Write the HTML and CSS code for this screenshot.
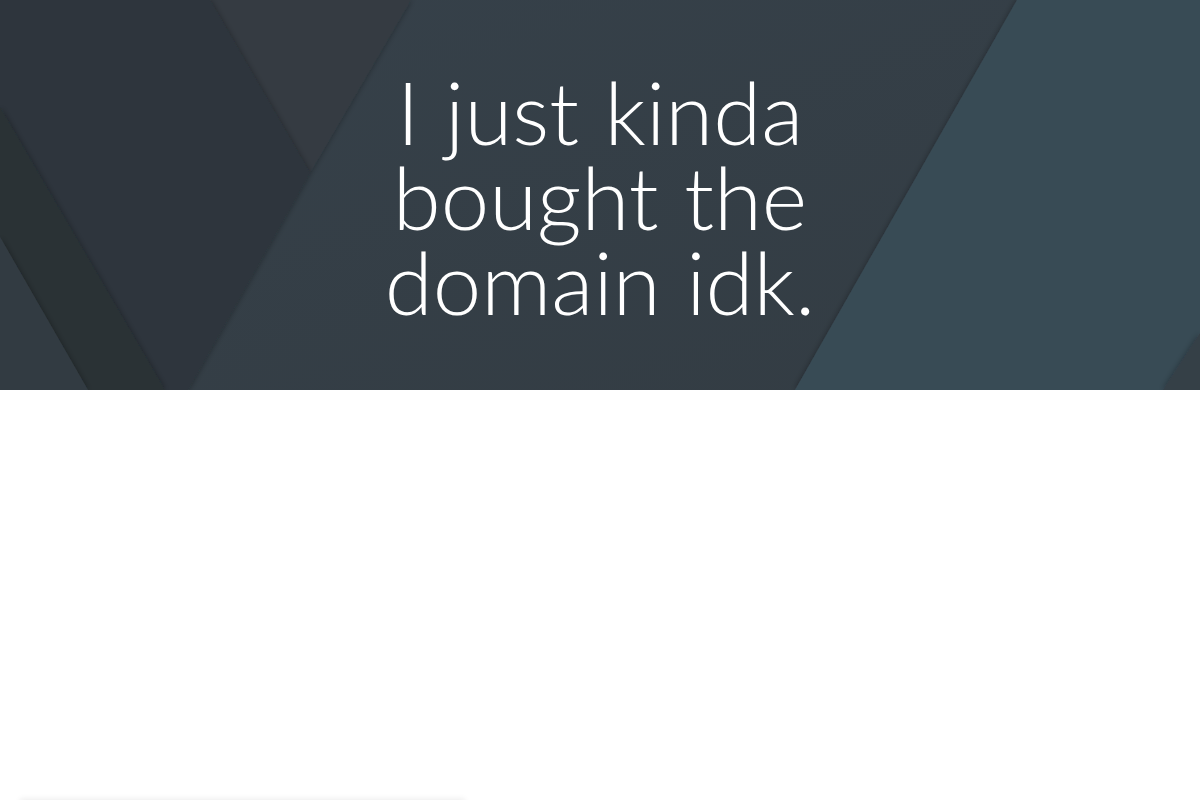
FILE: index.html
```html
<!DOCTYPE html>
<html lang="en">
<head>
<meta charset="utf-8">
<title>I just kinda bought the domain idk.</title>
<link rel="stylesheet" href="styles.css">
</head>
<body>
<header class="hero">
  <svg class="hero-bg" viewBox="0 0 1200 390" preserveAspectRatio="none" aria-hidden="true">
    <defs>
      <filter id="sh" x="-10%" y="-10%" width="120%" height="120%">
        <feDropShadow dx="0" dy="0" stdDeviation="3" flood-color="#000" flood-opacity="0.35"/>
      </filter>
      <linearGradient id="mid" x1="0" y1="0" x2="1" y2="1">
        <stop offset="0" stop-color="#36414a"/>
        <stop offset="1" stop-color="#333c43"/>
      </linearGradient>
    </defs>
    <rect width="1200" height="390" fill="url(#mid)"/>
    <polygon points="1017,0 1200,0 1200,390 795,390" fill="#394b55" filter="url(#sh)"/>
    <polygon points="1200,333 1200,390 1163,390" fill="#363f47" filter="url(#sh)"/>
    <polygon points="200,0 411,0 310,173" fill="#343b42" filter="url(#sh)"/>
    <polygon points="0,0 210,0 310,173 188,390 0,390" fill="#2d353c" filter="url(#sh)"/>
    <polygon points="0,107 165,390 0,390" fill="#293135" filter="url(#sh)"/>
    <polygon points="0,237 88,390 0,390" fill="#333b42" filter="url(#sh)"/>
  </svg>
  <h1 class="hero-title">I just kinda bought the domain idk.</h1>
</header>
<main class="content">
  <section class="cards">
    <article class="card"></article>
  </section>
</main>
</body>
</html>
```
FILE: styles.css
```css
* { box-sizing: border-box; }
html, body { margin: 0; padding: 0; background: #ffffff; }
body { font-family: Lato, "Open Sans", sans-serif; }

.hero {
  position: relative;
  height: 390px;
  overflow: hidden;
  display: flex;
  justify-content: center;
  background: #343d44;
}
.hero-bg {
  position: absolute;
  inset: 0;
  width: 100%;
  height: 100%;
}
.hero-title {
  position: relative;
  margin: 0;
  padding-top: 69px;
  width: 480px;
  text-align: center;
  color: #ffffff;
  font-family: Lato, sans-serif;
  font-weight: 300;
  font-size: 87px;
  line-height: 85px;
  word-spacing: 2px;
}

.content { padding: 410px 0 40px; }
.cards { display: grid; grid-template-columns: 445px; padding: 0 20px; }
.card {
  height: 300px;
  background: #fff;
  box-shadow: 0 -1px 6px rgba(0,0,0,0.08);
}
```
